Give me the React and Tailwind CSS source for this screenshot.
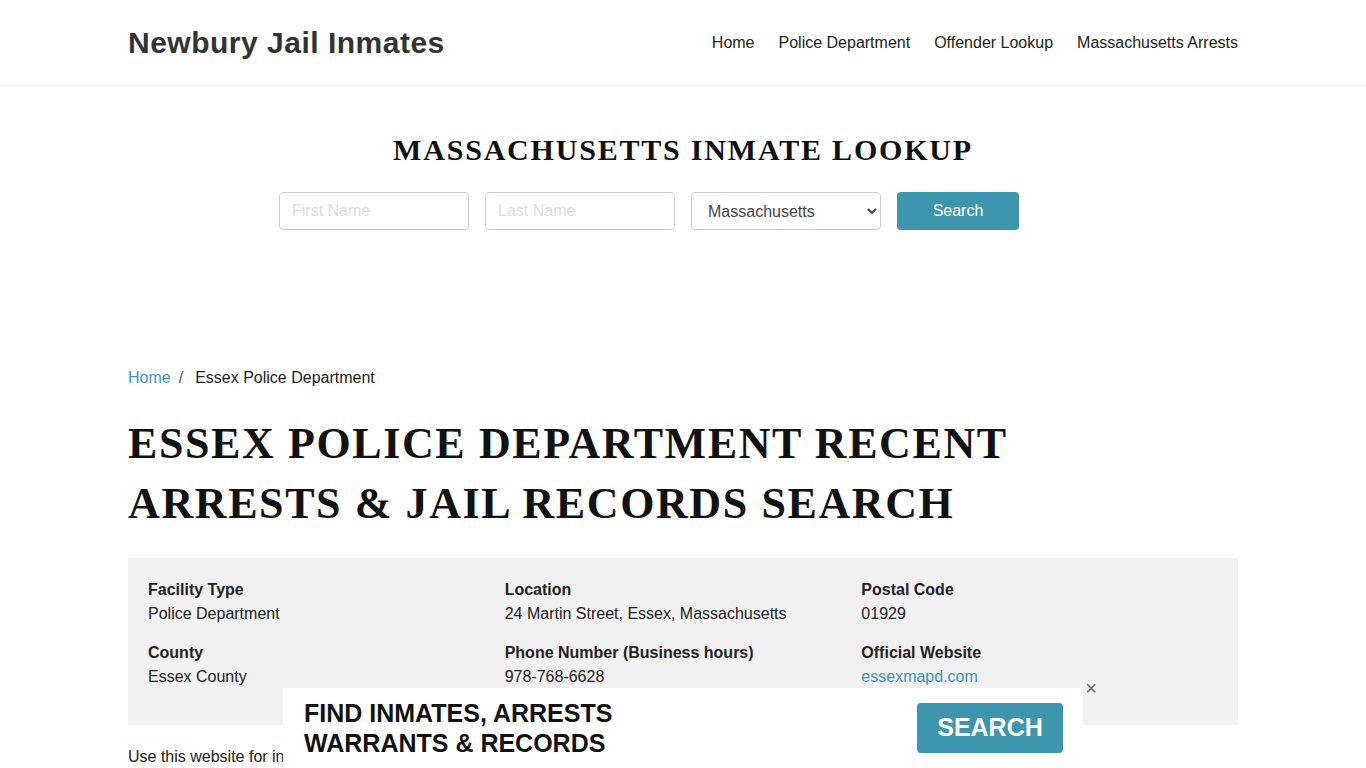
import React from "react";

const sans = "font-['Liberation_Sans',Arial,sans-serif]";
const serif = "font-['Liberation_Serif','Times_New_Roman',serif]";

const facts = [
  { label: "Facility Type", value: "Police Department" },
  { label: "Location", value: "24 Martin Street, Essex, Massachusetts" },
  { label: "Postal Code", value: "01929" },
  { label: "County", value: "Essex County" },
  { label: "Phone Number (Business hours)", value: "978-768-6628" },
  { label: "Official Website", value: "essexmapd.com", link: true },
];

export default function App() {
  return (
    <div className={`min-h-screen bg-white text-[#222] ${sans} relative overflow-hidden h-[768px]`}>
      <header className="border-b border-[#f0f0f0]">
        <div className="max-w-[1110px] mx-auto h-[85px] flex items-center justify-between">
          <a className="text-[30px] font-bold text-[#333] tracking-[0.5px]">Newbury Jail Inmates</a>
          <nav className="flex items-center gap-6 text-base text-[#222]">
            <a>Home</a>
            <a>Police Department</a>
            <a>Offender Lookup</a>
            <a>Massachusetts Arrests</a>
          </nav>
        </div>
      </header>

      <section className="pt-[46px] pb-[100px]">
        <h2 className={`${serif} text-center font-bold text-[30px] leading-[36px] tracking-[1.8px] text-[#111]`}>
          MASSACHUSETTS INMATE LOOKUP
        </h2>
        <div className="mt-[24px] flex justify-center gap-4 pr-[68px]">
          <input
            placeholder="First Name"
            className="w-[190px] h-[38px] border border-[#ccc] rounded px-3 text-base placeholder:text-[#ddd] outline-none"
          />
          <input
            placeholder="Last Name"
            className="w-[190px] h-[38px] border border-[#ccc] rounded px-3 text-base placeholder:text-[#ddd] outline-none"
          />
          <select className="w-[190px] h-[38px] border border-[#ccc] rounded px-3 text-base text-[#444] bg-white">
            <option>Massachusetts</option>
          </select>
          <button className="w-[122px] h-[38px] rounded bg-[#3d96ae] text-white text-base">Search</button>
        </div>
      </section>

      <main className="max-w-[1110px] mx-auto">
        <div className="pt-[36px] text-base flex items-center">
          <a className="text-[#3d96ae]">Home</a>
          <span className="px-2 text-[#555]">/</span>
          <span className="pl-1">Essex Police Department</span>
        </div>
        <h1 className={`${serif} mt-[24px] font-bold text-[44px] leading-[60px] tracking-[1.6px] text-[#111] max-w-[940px]`}>
          ESSEX POLICE DEPARTMENT RECENT ARRESTS &amp; JAIL RECORDS SEARCH
        </h1>
        <div className="mt-[24px] bg-[#f1f1f1] px-5 pt-[20px] pb-[36px] grid grid-cols-3 gap-y-[15px]">
          {facts.map((f) => (
            <div key={f.label} className="leading-6">
              <div className="font-bold">{f.label}</div>
              <div className={f.link ? "text-[#3d96ae]" : ""}>{f.value}</div>
            </div>
          ))}
        </div>
        <p className="mt-[20px] text-base">
          Use this website for information about Essex Police Department recent arrests and jail records.
        </p>
      </main>

      {/* sticky bottom ad bar */}
      <div className="absolute left-[283px] top-[688px] w-[800px] h-[80px] bg-white flex items-start justify-between pl-[21px] pr-[20px] pt-[10px]">
        <div className="font-bold text-[25px] leading-[30px] text-[#111]">
          FIND INMATES, ARRESTS
          <br />
          WARRANTS &amp; RECORDS
        </div>
        <button className="mt-[5px] w-[146px] h-[50px] rounded bg-[#3d96ae] text-white font-bold text-[25px]">SEARCH</button>
      </div>
      <button className="absolute left-[1084px] top-[679px] w-[14px] h-[18px] text-[#666] text-[20px] leading-[18px]">×</button>
    </div>
  );
}
